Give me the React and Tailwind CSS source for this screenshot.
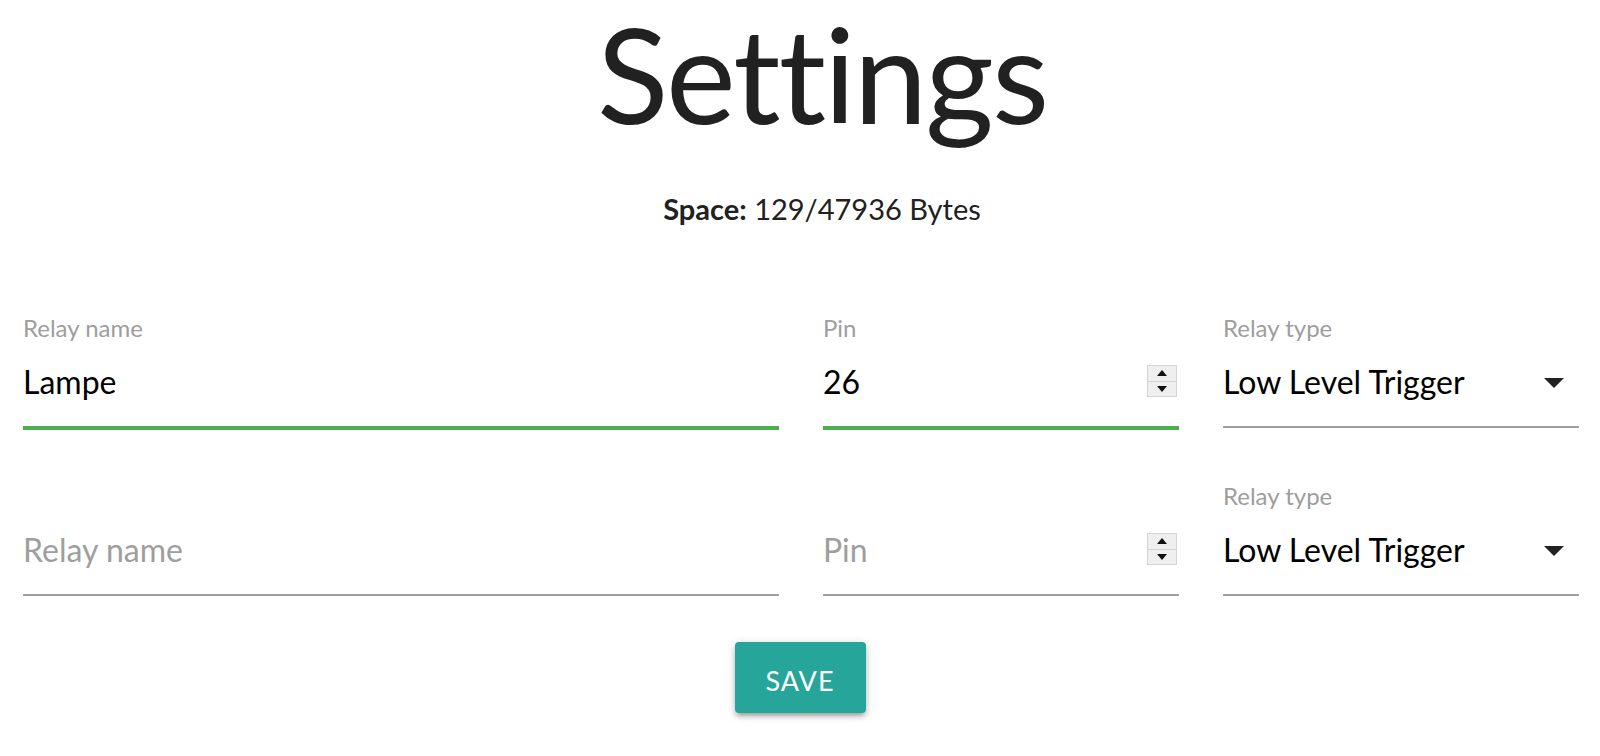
import React from 'react';

const font = { fontFamily: 'Lato, "Open Sans", sans-serif' };

const Spinner = () => (
  <div className="absolute right-[2px] top-[1px] flex h-[32px] w-[30px] flex-col border border-[#d4d4d4] bg-[#efefef]">
    <div className="flex flex-1 items-center justify-center border-b border-[#d4d4d4]">
      <svg width="10" height="6" viewBox="0 0 10 6">
        <path d="M0 6L5 0L10 6Z" fill="#111" />
      </svg>
    </div>
    <div className="flex flex-1 items-center justify-center">
      <svg width="10" height="6" viewBox="0 0 10 6">
        <path d="M0 0L10 0L5 6Z" fill="#111" />
      </svg>
    </div>
  </div>
);

const TextField = ({ label, value, placeholder, valid, spinner }) => (
  <div className="pl-[23px] pr-[21px]">
    {/* Label (kept as spacer when empty) */}
    <div className="h-[28px] text-[24px] leading-[28px] text-[#9e9e9e]">{label}</div>
    <div
      className={`relative mt-[22px] pb-[26px] border-b-2 ${
        valid ? 'border-[#4caf50] shadow-[0_2px_0_0_#4caf50]' : 'border-[#9e9e9e]'
      }`}
    >
      <input
        type="text"
        readOnly
        value={value}
        placeholder={placeholder}
        style={font}
        className="block h-[36px] w-full bg-transparent p-0 text-[32px] leading-[36px] text-black outline-none placeholder:text-[#9e9e9e]"
      />
      {spinner && <Spinner />}
    </div>
  </div>
);

const SelectField = ({ label, value }) => (
  <div className="pl-[23px] pr-[21px]">
    <div className="h-[28px] text-[24px] leading-[28px] text-[#9e9e9e]">{label}</div>
    <div className="mt-[22px] flex items-center justify-between border-b-2 border-[#9e9e9e] pb-[26px]">
      <span className="h-[36px] text-[32px] leading-[36px] text-black">{value}</span>
      <svg width="48" height="48" viewBox="0 0 24 24" className="-my-[6px] mr-[1px]">
        <path d="M7 10l5 5 5-5z" fill="#212121" />
      </svg>
    </div>
  </div>
);

export default function App() {
  return (
    <div className="min-h-screen w-full bg-white text-[#212121]" style={font}>
      {/* Title */}
      <h1 className="pl-[44px] text-center text-[132px] font-normal leading-[146px] tracking-[-2px]">
        Settings
      </h1>

      {/* Storage info */}
      <p className="mt-[45px] pl-[44px] text-center text-[29px] leading-[36px]">
        <span className="font-bold">Space:</span> 129/47936 Bytes
      </p>

      {/* Relay rows */}
      <div className="mt-[87px] grid grid-cols-[2fr_1fr_1fr] gap-y-[54px]">
        <TextField label="Relay name" value="Lampe" valid />
        <TextField label="Pin" value="26" valid spinner />
        <SelectField label="Relay type" value="Low Level Trigger" />

        <TextField label="" value="" placeholder="Relay name" />
        <TextField label="" value="" placeholder="Pin" spinner />
        <SelectField label="Relay type" value="Low Level Trigger" />
      </div>

      {/* Save */}
      <div className="mt-[46px] flex justify-center">
        <button className="h-[71px] w-[131px] rounded-[4px] bg-[#26a69a] pt-[7px] text-[27px] tracking-[1px] text-white shadow-[0_4px_4px_0_rgba(0,0,0,0.14),0_6px_2px_-4px_rgba(0,0,0,0.12),0_2px_10px_0_rgba(0,0,0,0.2)]">
          SAVE
        </button>
      </div>
    </div>
  );
}
